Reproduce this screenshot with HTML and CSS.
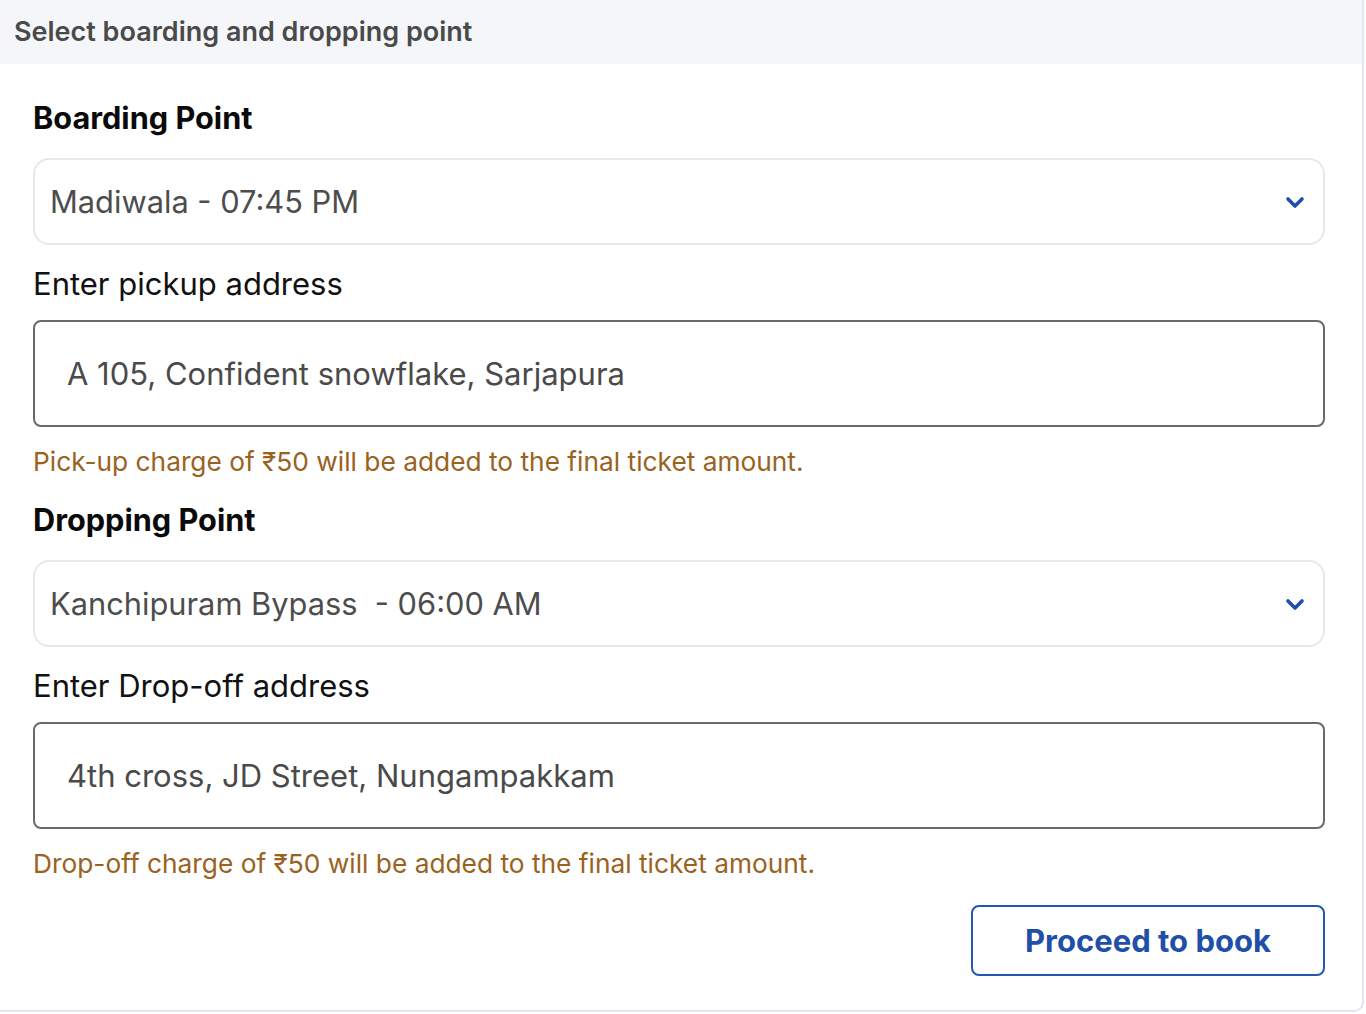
FILE: index.html
```html
<!DOCTYPE html>
<html lang="en">
<head>
<meta charset="utf-8">
<title>Select boarding and dropping point</title>
<link rel="stylesheet" href="styles.css">
</head>
<body>
<div class="card">
  <div class="card-header">Select boarding and dropping point</div>
  <div class="card-body">
    <h2 class="section-title">Boarding Point</h2>
    <div class="select">
      <span class="select-value">Madiwala - 07:45 PM</span>
      <svg class="chevron" width="20" height="14" viewBox="0 0 20 14"><path d="M3 3 L10 10 L17 3" fill="none" stroke="#1f4fa8" stroke-width="3.6" stroke-linecap="round" stroke-linejoin="round"/></svg>
    </div>
    <div class="field-label">Enter pickup address</div>
    <div class="text-input">A 105, Confident snowflake, Sarjapura</div>
    <p class="note">Pick-up charge of ₹50 will be added to the final ticket amount.</p>

    <h2 class="section-title">Dropping Point</h2>
    <div class="select">
      <span class="select-value">Kanchipuram Bypass&nbsp; - 06:00 AM</span>
      <svg class="chevron" width="20" height="14" viewBox="0 0 20 14"><path d="M3 3 L10 10 L17 3" fill="none" stroke="#1f4fa8" stroke-width="3.6" stroke-linecap="round" stroke-linejoin="round"/></svg>
    </div>
    <div class="field-label">Enter Drop-off address</div>
    <div class="text-input">4th cross, JD Street, Nungampakkam</div>
    <p class="note">Drop-off charge of ₹50 will be added to the final ticket amount.</p>

    <div class="actions">
      <button class="btn-outline" type="button">Proceed to book</button>
    </div>
  </div>
</div>
</body>
</html>
```

FILE: styles.css
```css
* { box-sizing: border-box; }
html, body { margin: 0; padding: 0; background: #ffffff; }
body { font-family: Inter, "Noto Sans", sans-serif; }

.card {
  width: 1364px;
  height: 1012px;
  background: #ffffff;
  border-right: 2px solid #dfe5f5;
  border-bottom: 2px solid #dfe5f5;
  border-bottom-right-radius: 10px;
  overflow: hidden;
}

.card-header {
  height: 64px;
  background: #f5f6fa;
  padding: 0 14px 2px;
  display: flex;
  align-items: center;
  font-size: 27px;
  font-weight: 600;
  color: #4a4a4a;
}

.card-body {
  padding: 36px 37px 0 33px;
}

.section-title {
  margin: 0;
  font-family: Inter, sans-serif;
  font-size: 30.7px;
  line-height: 36px;
  font-weight: 700;
  color: #0a0a0a;
}

.select {
  margin-top: 22px;
  height: 87px;
  border: 2px solid #e8e8e8;
  border-radius: 16px;
  display: flex;
  align-items: center;
  justify-content: space-between;
  padding: 0 18px 0 15px;
}

.select-value {
  font-size: 30.8px;
  color: #4d4d4d;
  white-space: pre;
}

.chevron { display: block; margin-top: 2px; }

.field-label {
  margin-top: 21px;
  font-size: 31px;
  line-height: 36px;
  color: #111111;
}

.text-input {
  margin-top: 18px;
  height: 107px;
  border: 2px solid #6a6a6a;
  border-radius: 8px;
  display: flex;
  align-items: center;
  padding: 0 32px;
  font-size: 31px;
  color: #4a4a4a;
}

.note {
  margin: 19px 0 0;
  font-family: Inter, sans-serif;
  font-size: 26.3px;
  line-height: 32px;
  color: #9a621f;
}

.note + .section-title { margin-top: 24px; }

.actions {
  display: flex;
  justify-content: flex-end;
  margin-top: 25px;
}

.btn-outline {
  width: 354px;
  height: 71px;
  background: #ffffff;
  border: 2px solid #2356b0;
  border-radius: 8px;
  font-family: Inter, sans-serif;
  font-size: 31px;
  font-weight: 700;
  color: #1f4fa8;
  cursor: pointer;
}
```
